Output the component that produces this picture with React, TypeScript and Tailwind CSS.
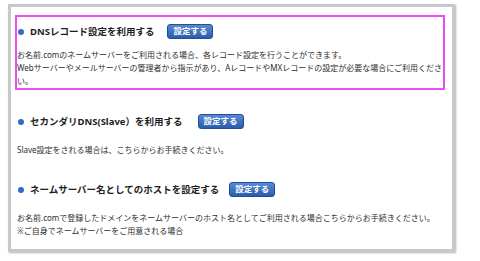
import React from 'react';

const font = { fontFamily: '"Noto Sans", "Noto Sans CJK JP", sans-serif' };

const SettingButton = () => (
    <button className="flex h-[15px] w-[46px] items-center justify-center rounded-[3px] border border-[#1f4f9c] bg-gradient-to-b from-[#5b8ad3] to-[#2a5cad] text-[8.5px] leading-none font-bold text-white">
        設定する
    </button>
);

const Heading = ({ title, gap }: { title: string; gap: string }) => (
    <div className="flex h-[15px] items-center">
        <span className="ml-[1px] h-[6px] w-[6px] rounded-full bg-[#3468cc]" />
        <h2 className={`ml-[6px] text-[9.5px] leading-none font-bold text-[#1e1e1e] ${gap}`}>{title}</h2>
        <SettingButton />
    </div>
);

const App = () => {
    return (
        <div className="h-[261px] w-[480px] bg-white" style={font}>
            <div className="ml-[8px] pt-[4px]">
                <div className="h-[248px] w-[447px] border-[3px] border-[#c6c9cb] bg-white shadow-[1px_1px_2px_rgba(0,0,0,0.3)]">
                    <div className="pl-[4px] pr-[7px] pt-[8px]">
                        {/* DNS record section (highlighted) */}
                        <div className="border-2 border-[#ee4cee] pt-[7px] pb-[1px]">
                            <Heading title="DNSレコード設定を利用する" gap="mr-[13px]" />
                            <p className="mt-[9px] whitespace-nowrap text-[8px] leading-[13px] text-[#2e2e2e]">
                                お名前.comのネームサーバーをご利用される場合、各レコード設定を行うことができます。
                                <br />
                                Webサーバーやメールサーバーの管理者から指示があり、AレコードやMXレコードの設定が必要な場合にご利用くださ
                                <br />
                                い。
                            </p>
                        </div>

                        {/* Secondary DNS */}
                        <div className="mt-[24px] pl-[2px]">
                            <Heading title="セカンダリDNS(Slave）を利用する" gap="mr-[15px]" />
                            <p className="mt-[14px] text-[8px] leading-[13px] text-[#2e2e2e]">
                                Slave設定をされる場合は、こちらからお手続きください。
                            </p>
                        </div>

                        {/* Host as nameserver */}
                        <div className="mt-[26px] pl-[2px]">
                            <Heading title="ネームサーバー名としてのホストを設定する" gap="mr-[10px]" />
                            <p className="mt-[14px] whitespace-nowrap text-[8px] leading-[13px] text-[#2e2e2e]">
                                お名前.comで登録したドメインをネームサーバーのホスト名としてご利用される場合こちらからお手続きください。
                                <br />
                                ※ご自身でネームサーバーをご用意される場合
                            </p>
                        </div>
                    </div>
                </div>
            </div>
        </div>
    );
};

export default App;
